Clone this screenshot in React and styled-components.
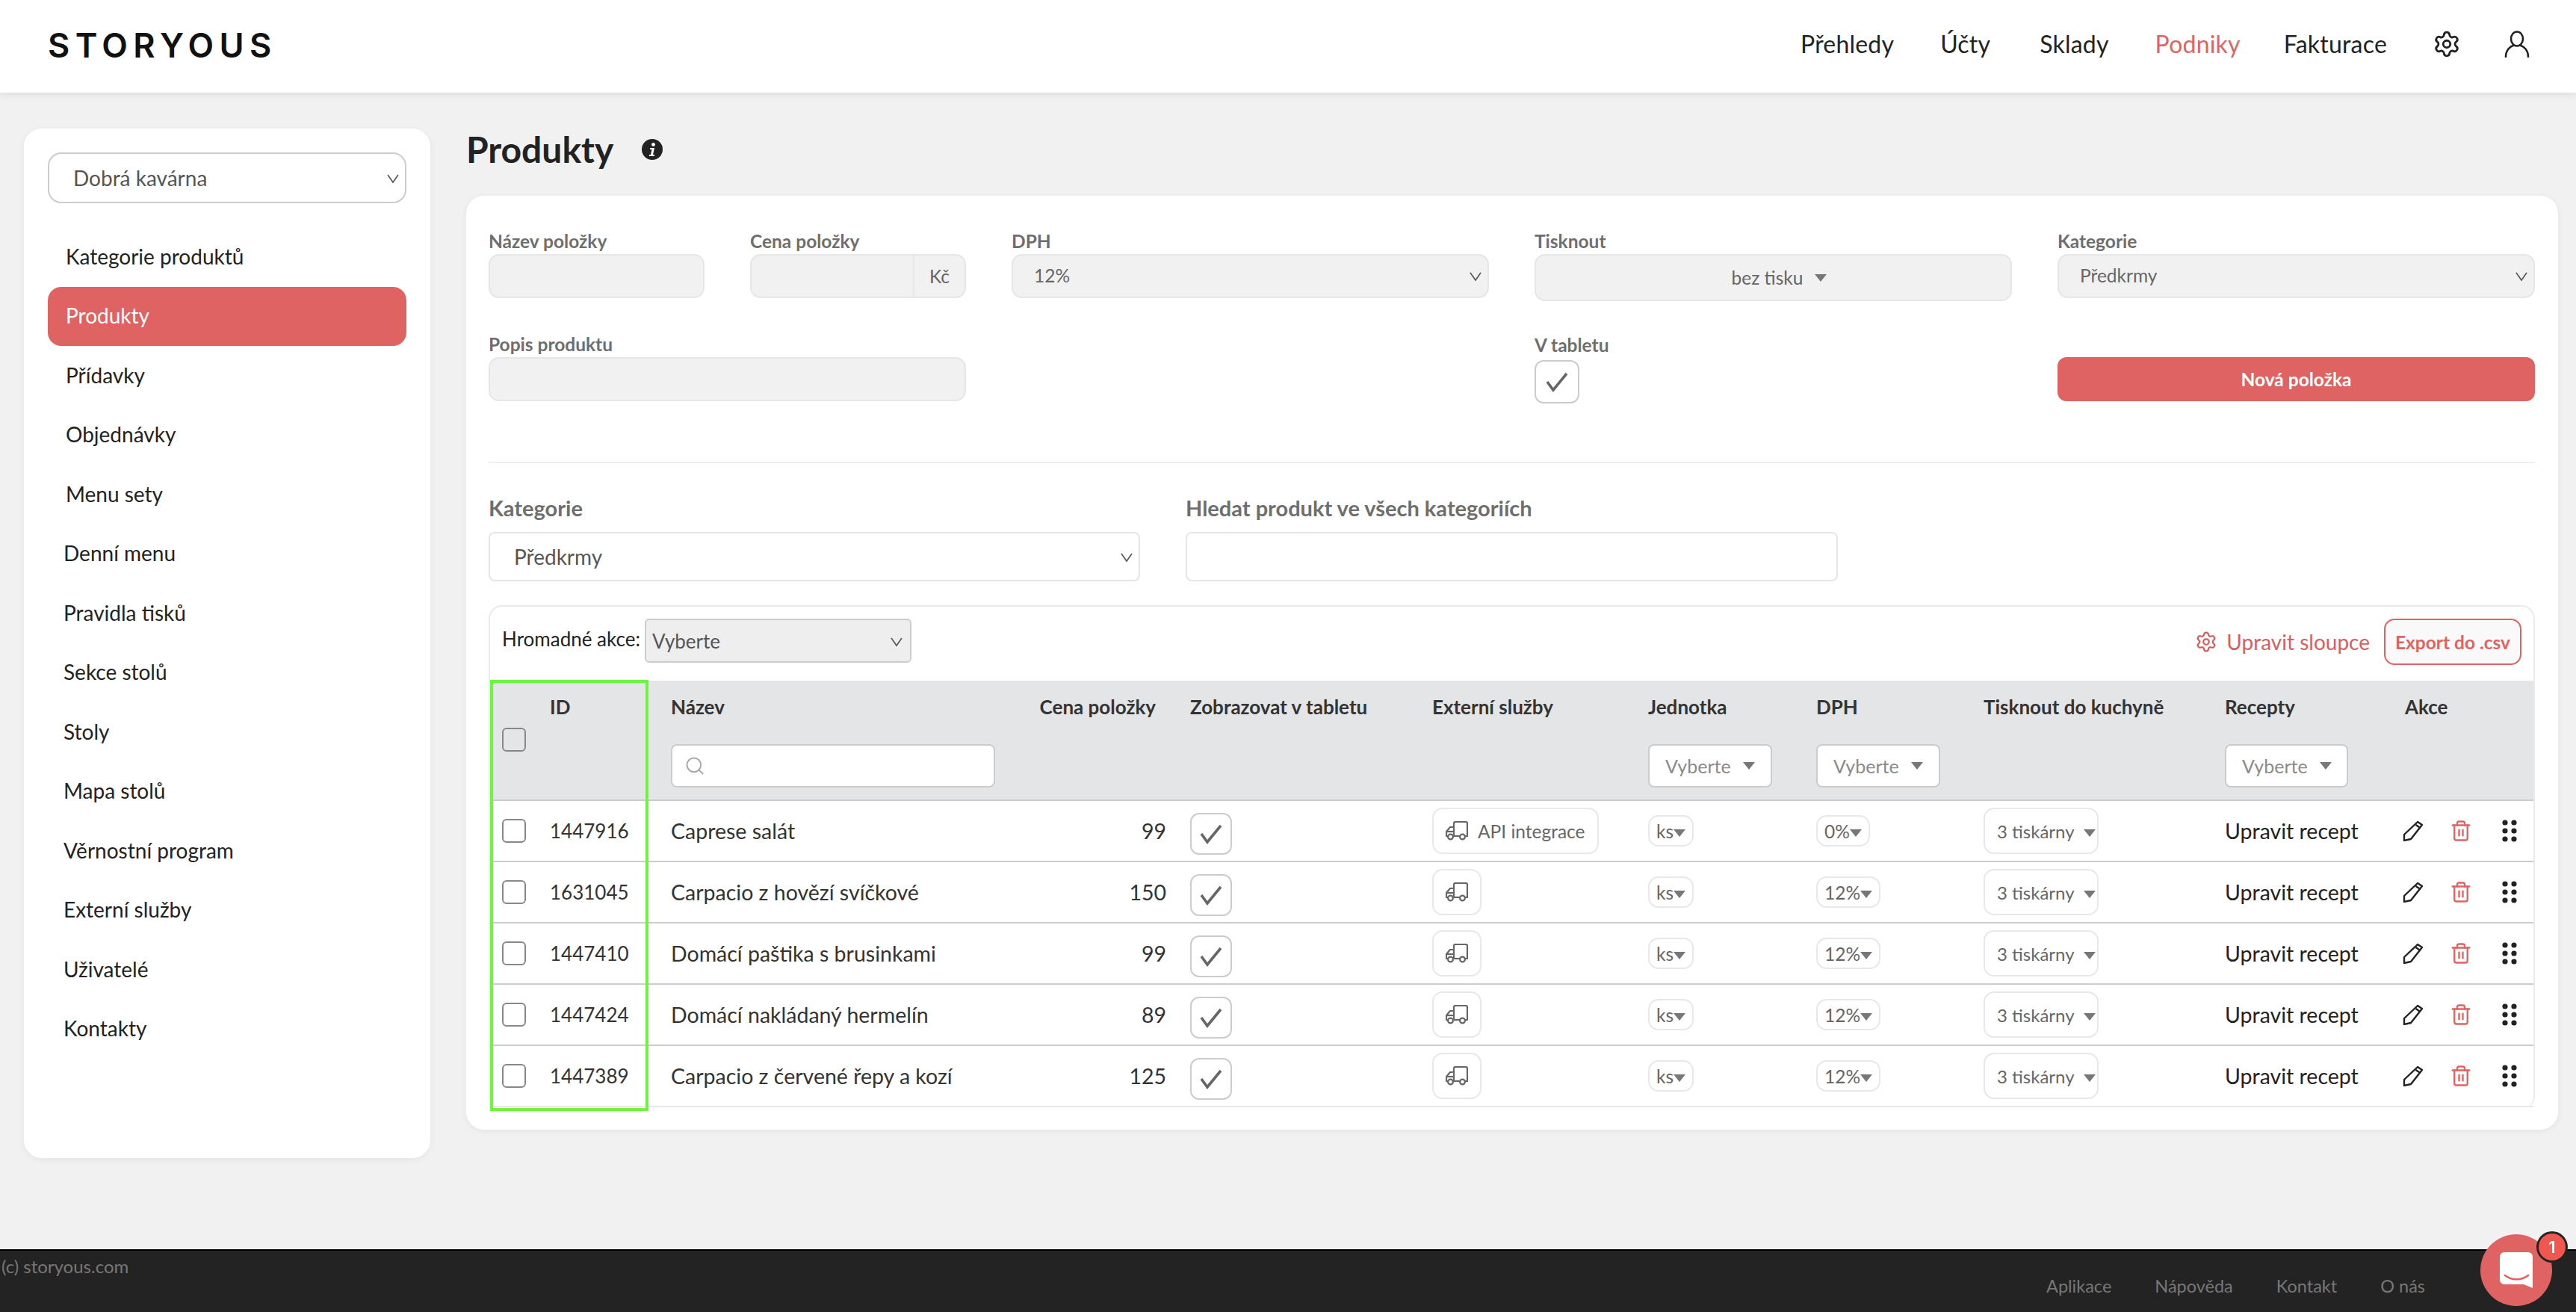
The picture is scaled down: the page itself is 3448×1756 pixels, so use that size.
import React from "react";
import styled, { createGlobalStyle } from "styled-components";
import { Settings, Search, Trash2 } from "lucide-react";

const coral = "#e06363";

const GlobalStyle = createGlobalStyle`
  * { box-sizing: border-box; }
  html, body { margin: 0; padding: 0; }
  body {
    background: #f1f1f1;
    color: #222;
    font-family: Lato, "Noto Sans", sans-serif;
    font-size: 28px;
  }
`;

const Page = styled.div`
  min-height: 100vh;
  display: flex;
  flex-direction: column;
`;

/* Top bar */
const Header = styled.header`
  height: 124px;
  flex: none;
  background: #fff;
  box-shadow: 0 2px 10px rgba(0, 0, 0, 0.1);
  display: flex;
  align-items: center;
  justify-content: space-between;
  padding: 0 62px 0 64px;
`;

const Logo = styled.div`
  font-family: Inter, sans-serif;
  font-size: 45px;
  font-weight: 600;
  letter-spacing: 7.4px;
  color: #111;
  margin-bottom: 3px;
`;

const TopNav = styled.nav`
  display: flex;
  align-items: center;
  gap: 62px;
  margin-bottom: 7px;
`;

const TopLink = styled.a`
  font-size: 32px;
  line-height: 40px;
  letter-spacing: 0.2px;
  margin-left: ${(p) => p.$shift || 0}px;
  color: ${(p) => (p.$active ? coral : "#222")};
`;

const NavIcons = styled.div`
  display: flex;
  align-items: center;
  gap: 58px;
  margin-left: -1px;
`;

/* Body */
const Content = styled.div`
  flex: 1;
  display: flex;
  align-items: flex-start;
  gap: 48px;
  padding: 48px 24px 0 32px;
`;

const Sidebar = styled.aside`
  width: 544px;
  height: 1378px;
  flex: none;
  background: #fff;
  border-radius: 24px;
  box-shadow: 0 2px 10px rgba(0, 0, 0, 0.06);
  padding: 32px;
`;

const VenueSelect = styled.div`
  height: 68px;
  border: 2px solid #ccc;
  border-radius: 18px;
  background: #fff;
  display: flex;
  align-items: center;
  justify-content: space-between;
  padding: 0 6px 0 32px;
  font-size: 28px;
  color: #555;
  margin-bottom: 32px;
`;

const SideMenu = styled.ul`
  list-style: none;
  margin: 0;
  padding: 0;
  display: flex;
  flex-direction: column;
`;

const SideItem = styled.li`
  height: 79.5px;
  display: flex;
  align-items: center;
  padding: 0 0 2px ${(p) => (p.$outdent ? "21px" : "24px")};
  border-radius: 18px;
  font-size: 28px;
  background: ${(p) => (p.$active ? coral : "transparent")};
  color: ${(p) => (p.$active ? "#fff" : "#222")};
`;

const Main = styled.main`
  flex: 1;
  min-width: 0;
`;

const TitleRow = styled.div`
  height: 90px;
  display: flex;
  align-items: flex-start;
  gap: 38px;
`;

const Title = styled.h1`
  margin: 0;
  font-size: 48px;
  line-height: 56px;
  font-weight: 700;
  color: #222;
`;

const InfoWrap = styled.span`
  display: flex;
  margin-top: 14px;
`;

const Card = styled.section`
  background: #fff;
  border-radius: 24px;
  box-shadow: 0 2px 10px rgba(0, 0, 0, 0.06);
  padding: 49px 31px 30px 30px;
`;

/* Item form */
const FormGrid = styled.div`
  display: grid;
  grid-template-columns: 289px 289px 639px 639px 639px;
  column-gap: 61px;
  row-gap: 46px;
`;

const Field = styled.div`
  grid-column: ${(p) => p.$span || "auto"};
`;

const FieldLabel = styled.label`
  display: block;
  height: 26px;
  line-height: 24px;
  margin-bottom: ${(p) => (p.$low ? "6px" : "3px")};
  margin-top: ${(p) => (p.$low ? "1px" : "0")};
  font-size: 24.5px;
  font-weight: 700;
  color: #6e6e6e;
`;

const InputBox = styled.div`
  height: ${(p) => p.$h || 59}px;
  background: #f1f1f1;
  border: 2px solid #e6e6e6;
  border-radius: 14px;
  display: flex;
  align-items: center;
  justify-content: ${(p) => (p.$center ? "center" : "space-between")};
  padding: ${(p) => (p.$center ? "0 0 0 16px" : "0 6px 2px 28px")};
  font-size: 24.5px;
  color: #666;
`;

const PriceBox = styled(InputBox)`
  padding: 0;
  justify-content: flex-end;
`;

const Suffix = styled.span`
  width: 69px;
  height: 100%;
  border-left: 2px solid #e6e6e6;
  display: flex;
  align-items: center;
  justify-content: center;
`;

const Caret = styled.i`
  display: inline-block;
  width: 0;
  height: 0;
  flex: none;
  margin-left: ${(p) => p.$gap ?? 16}px;
  border-left: 8px solid transparent;
  border-right: 8px solid transparent;
  border-top: 10px solid ${(p) => p.$color || "#777"};
  vertical-align: middle;
`;

const CheckBox = styled.span`
  display: inline-flex;
  align-items: center;
  justify-content: center;
  width: ${(p) => p.$w}px;
  height: ${(p) => p.$h}px;
  border: 2px solid #ccc;
  border-radius: 12px;
  background: #fff;
  color: #666;
`;

const SaveButton = styled.button`
  display: block;
  width: 100%;
  height: 59px;
  margin-top: 29px;
  border: 0;
  border-radius: 12px;
  background: ${coral};
  color: #fff;
  font-family: inherit;
  font-size: 24.5px;
  font-weight: 700;
`;

const Divider = styled.hr`
  height: 2px;
  margin: 78px 0 45px;
  border: 0;
  background: #eee;
`;

/* Filters above the table */
const FilterRow = styled.div`
  display: flex;
  gap: 61px;
  margin-bottom: 32px;
`;

const FilterField = styled.div`
  width: ${(p) => p.$w}px;
`;

const FilterLabel = styled.label`
  display: block;
  height: 32px;
  line-height: 30px;
  margin-bottom: 15px;
  font-size: 29px;
  font-weight: 700;
  color: #6e6e6e;
`;

const FilterBox = styled.div`
  height: 66px;
  border: 2px solid #e6e6e6;
  border-radius: 8px;
  background: #fff;
  display: flex;
  align-items: center;
  justify-content: space-between;
  padding: 0 6px 0 32px;
  font-size: 28px;
  color: #555;
`;

/* Table */
const TablePanel = styled.div`
  position: relative;
  border: 2px solid #ebebeb;
  border-bottom: 0;
  border-radius: 18px 18px 14px 14px;
`;

const Toolbar = styled.div`
  height: 99px;
  display: flex;
  justify-content: space-between;
  padding: 16px 16px 0 16px;
`;

const BulkGroup = styled.div`
  display: flex;
  align-items: flex-start;
  gap: 6px;
  font-size: 26px;
  line-height: 54px;
`;

const BulkSelect = styled.div`
  width: 357px;
  height: 59px;
  border: 2px solid #ccc;
  border-radius: 6px;
  background: #eee;
  display: flex;
  align-items: center;
  justify-content: space-between;
  padding: 0 8px 0 8px;
  font-size: 26px;
  color: #555;
`;

const ToolActions = styled.div`
  display: flex;
  align-items: flex-start;
  gap: 19px;
`;

const EditColumns = styled.a`
  display: flex;
  align-items: center;
  gap: 12px;
  height: 62px;
  color: #d65f5f;
  font-size: 28px;
`;

const ExportButton = styled.button`
  width: 184px;
  height: 62px;
  padding: 0;
  border: 2px solid ${coral};
  border-radius: 14px;
  background: #f9f9f9;
  color: ${coral};
  font-family: inherit;
  font-size: 24.5px;
  font-weight: 700;
`;

const Table = styled.table`
  width: 100%;
  table-layout: fixed;
  border-collapse: separate;
  border-spacing: 0;
`;

const Th = styled.th`
  height: 161px;
  padding: ${(p) => (p.$checkCell ? "63px 0 0 16px" : "22px 0 0 16px")};
  vertical-align: top;
  text-align: left;
  background: #e4e5e7;
  border-bottom: 2px solid #ccc;
  font-size: 26px;
  line-height: 26px;
  font-weight: 700;
  color: #333;
  white-space: nowrap;
`;

const HeadTitle = styled.div`
  text-align: ${(p) => p.$align || "left"};
  padding-right: ${(p) => p.$pr || 0}px;
`;

const HeadFilter = styled.div`
  width: ${(p) => p.$w}px;
  height: 58px;
  margin-top: 37px;
  border: 2px solid #ccc;
  border-radius: 8px;
  background: #fff;
  display: flex;
  align-items: center;
  padding: 0 21px;
  font-size: 25px;
  font-weight: 400;
  color: #8a8a8a;
`;

const HeadSearch = styled(HeadFilter)`
  padding: 0 16px;
  color: #aaa;
`;

const Td = styled.td`
  height: 82px;
  padding: 0 ${(p) => (p.$right ? "16px" : "0")} 0 ${(p) => (p.$right ? "0" : "16px")};
  vertical-align: middle;
  text-align: ${(p) => (p.$right ? "right" : "left")};
  border-bottom: 2px solid ${(p) => (p.$last ? "#e8e8e8" : "#ccc")};
  font-size: ${(p) => p.$fs || 28.5}px;
  color: #333;
  white-space: nowrap;
`;

const RowCheck = styled.span`
  display: block;
  width: 32px;
  height: 32px;
  border: 2px solid #888;
  border-radius: 6px;
  background: ${(p) => (p.$head ? "#e4e5e7" : "#fff")};
`;

const TabletCheck = styled(CheckBox)`
  margin-top: 8px;
  vertical-align: middle;
`;

const PillButton = styled.span`
  display: inline-flex;
  align-items: center;
  gap: 13px;
  height: ${(p) => p.$h}px;
  padding: 0 ${(p) => p.$pr ?? p.$px}px 0 ${(p) => p.$px}px;
  border: 2px solid #e8e8e8;
  border-radius: 14px;
  background: #fff;
  font-size: ${(p) => p.$fs || 24.5}px;
  color: #666;
  vertical-align: middle;
`;

const Actions = styled.div`
  display: flex;
  align-items: center;
  gap: 35px;
  margin-left: -3px;
  color: #222;
`;

const GripWrap = styled.span`
  display: flex;
  margin-left: 5px;
`;

const RecipeLink = styled.a`
  color: #222;
`;

/* Marker drawn over the ID column */
const Highlight = styled.div`
  position: absolute;
  left: 0;
  top: 98px;
  width: 212px;
  height: 577px;
  border: 4px solid #6ef542;
  pointer-events: none;
`;

/* Footer */
const Footer = styled.footer`
  height: 84px;
  flex: none;
  margin-top: auto;
  background: #232323;
  border-top: 2px solid #000;
  display: flex;
  justify-content: space-between;
  padding: 6px 202px 0 2px;
  font-size: 24px;
  color: #777;
`;

const FooterLinks = styled.div`
  display: flex;
  gap: 58px;
  padding-top: 27px;
  font-size: 23.5px;
`;

const Messenger = styled.div`
  position: fixed;
  left: 3320px;
  top: 1652px;
  width: 96px;
  height: 96px;
  border-radius: 50%;
  background: ${coral};
  display: flex;
  align-items: center;
  justify-content: center;
`;

const Badge = styled.span`
  position: absolute;
  right: -18px;
  top: -1px;
  width: 36px;
  height: 36px;
  border-radius: 50%;
  background: #f0584f;
  box-shadow: 0 0 0 3px #232323;
  color: #fff;
  font-family: Inter, sans-serif;
  font-size: 22px;
  font-weight: 600;
  display: flex;
  align-items: center;
  justify-content: center;
`;

const Chevron = () => (
  <svg width="20" height="20" viewBox="0 0 20 20" fill="none" stroke="#555" strokeWidth="1.6">
    <path d="M3 6l7 10 7-10" />
  </svg>
);

const Check = ({ size = 30 }) => (
  <svg width={size} height={size} viewBox="0 0 30 30" fill="none" stroke="currentColor" strokeWidth="3.6">
    <path d="M2 15l8 11L28 4" />
  </svg>
);

const Info = () => (
  <svg width="28" height="28" viewBox="0 0 28 28">
    <circle cx="14" cy="14" r="14" fill="#222" />
    <circle cx="15.5" cy="7.5" r="2.4" fill="#fff" />
    <path d="M11 12h6l-2 9h2v2h-7v-2h2l1.5-7H11z" fill="#fff" />
  </svg>
);

const UserIcon = () => (
  <svg width="34" height="36" viewBox="0 0 34 36" fill="none" stroke="#222" strokeWidth="2.6" strokeLinecap="round">
    <ellipse cx="17" cy="11" rx="8" ry="9.5" />
    <path d="M2 35c0-9 6-14 10-15M32 35c0-9-6-14-10-15" />
  </svg>
);

const TruckIcon = () => (
  <svg width="30" height="26" viewBox="0 0 30 26" fill="none" stroke="#666" strokeWidth="2.2" strokeLinejoin="round">
    <path d="M11 20V3a2 2 0 0 1 2-2h14a2 2 0 0 1 2 2v17h-4" />
    <path d="M11 8H6l-5 6v6h2" />
    <path d="M1 14h10" />
    <path d="M11 20h9" />
    <circle cx="6.5" cy="21" r="3.4" />
    <circle cx="22.5" cy="21" r="3.4" />
  </svg>
);

const PencilIcon = () => (
  <svg width="28" height="28" viewBox="0 0 28 28" fill="none" stroke="#222" strokeWidth="2.4" strokeLinejoin="round">
    <path d="M20 2l6 4L11 25l-9 2 0-8z" />
    <path d="M17.5 6l6 4" />
  </svg>
);

const GripIcon = () => (
  <svg width="20" height="30" viewBox="0 0 20 30" fill="#222">
    <circle cx="4" cy="4" r="3.6" />
    <circle cx="16" cy="4" r="3.6" />
    <circle cx="4" cy="15" r="3.6" />
    <circle cx="16" cy="15" r="3.6" />
    <circle cx="4" cy="26" r="3.6" />
    <circle cx="16" cy="26" r="3.6" />
  </svg>
);

const ChatIcon = () => (
  <svg width="44" height="48" viewBox="0 0 44 48">
    <path d="M6 0h32a6 6 0 0 1 6 6v42l-12-5H6a6 6 0 0 1-6-6V6a6 6 0 0 1 6-6z" fill="#fff" />
    <path d="M7 31c9 7 22 7 31 0" fill="none" stroke={coral} strokeWidth="2.6" strokeLinecap="round" />
  </svg>
);

const sideItems = [
  ["Kategorie produktů"],
  ["Produkty", "active"],
  ["Přídavky"],
  ["Objednávky"],
  ["Menu sety"],
  ["Denní menu", "outdent"],
  ["Pravidla tisků", "outdent"],
  ["Sekce stolů", "outdent"],
  ["Stoly", "outdent"],
  ["Mapa stolů", "outdent"],
  ["Věrnostní program", "outdent"],
  ["Externí služby", "outdent"],
  ["Uživatelé", "outdent"],
  ["Kontakty", "outdent"],
];

const products = [
  { id: "1447916", name: "Caprese salát", price: 99, vat: "0%", api: true },
  { id: "1631045", name: "Carpacio z hovězí svíčkové", price: 150, vat: "12%" },
  { id: "1447410", name: "Domácí paštika s brusinkami", price: 99, vat: "12%" },
  { id: "1447424", name: "Domácí nakládaný hermelín", price: 89, vat: "12%" },
  { id: "1447389", name: "Carpacio z červené řepy a kozí", price: 125, vat: "12%" },
];

// column starts follow the reference: 656, 720, 882, 1350, 1577, 1901, 2190, 2415, 2639, 2962, 3203
const colWidths = [64, 162, 468, 227, 324, 289, 225, 224, 323, 241, 188];

function App() {
  return (
    <Page>
      <GlobalStyle />
      <Header>
        <Logo>STORYOUS</Logo>
        <TopNav>
          <TopLink>Přehledy</TopLink>
          <TopLink>Účty</TopLink>
          <TopLink $shift={4}>Sklady</TopLink>
          <TopLink $active>Podniky</TopLink>
          <TopLink $shift={-4}>Fakturace</TopLink>
          <NavIcons>
            <Settings size={38} strokeWidth={1.8} color="#222" />
            <UserIcon />
          </NavIcons>
        </TopNav>
      </Header>

      <Content>
        <Sidebar>
          <VenueSelect>
            Dobrá kavárna
            <Chevron />
          </VenueSelect>
          <SideMenu>
            {sideItems.map(([label, kind]) => (
              <SideItem key={label} $active={kind === "active"} $outdent={kind === "outdent"}>
                {label}
              </SideItem>
            ))}
          </SideMenu>
        </Sidebar>

        <Main>
          <TitleRow>
            <Title>Produkty</Title>
            <InfoWrap>
              <Info />
            </InfoWrap>
          </TitleRow>

          <Card>
            <FormGrid>
              <Field>
                <FieldLabel>Název položky</FieldLabel>
                <InputBox />
              </Field>
              <Field>
                <FieldLabel>Cena položky</FieldLabel>
                <PriceBox>
                  <Suffix>Kč</Suffix>
                </PriceBox>
              </Field>
              <Field>
                <FieldLabel>DPH</FieldLabel>
                <InputBox>
                  12%
                  <Chevron />
                </InputBox>
              </Field>
              <Field>
                <FieldLabel>Tisknout</FieldLabel>
                <InputBox $h={63} $center>
                  bez tisku
                  <Caret />
                </InputBox>
              </Field>
              <Field>
                <FieldLabel>Kategorie</FieldLabel>
                <InputBox>
                  Předkrmy
                  <Chevron />
                </InputBox>
              </Field>
              <Field $span="1 / span 2">
                <FieldLabel>Popis produktu</FieldLabel>
                <InputBox />
              </Field>
              <Field $span="4">
                <FieldLabel $low>V tabletu</FieldLabel>
                <CheckBox $w={60} $h={58}>
                  <Check />
                </CheckBox>
              </Field>
              <Field $span="5">
                <SaveButton>Nová položka</SaveButton>
              </Field>
            </FormGrid>

            <Divider />

            <FilterRow>
              <FilterField $w={872}>
                <FilterLabel>Kategorie</FilterLabel>
                <FilterBox>
                  Předkrmy
                  <Chevron />
                </FilterBox>
              </FilterField>
              <FilterField $w={873}>
                <FilterLabel>Hledat produkt ve všech kategoriích</FilterLabel>
                <FilterBox />
              </FilterField>
            </FilterRow>

            <TablePanel>
              <Toolbar>
                <BulkGroup>
                  Hromadné akce:
                  <BulkSelect>
                    Vyberte
                    <Chevron />
                  </BulkSelect>
                </BulkGroup>
                <ToolActions>
                  <EditColumns>
                    <Settings size={30} strokeWidth={1.8} />
                    Upravit sloupce
                  </EditColumns>
                  <ExportButton>Export do .csv</ExportButton>
                </ToolActions>
              </Toolbar>

              <Table>
                <colgroup>
                  {colWidths.map((w, i) => (
                    <col key={i} style={{ width: w }} />
                  ))}
                </colgroup>
                <thead>
                  <tr>
                    <Th $checkCell>
                      <RowCheck $head />
                    </Th>
                    <Th>ID</Th>
                    <Th>
                      <HeadTitle>Název</HeadTitle>
                      <HeadSearch $w={434}>
                        <Search size={28} strokeWidth={1.8} />
                      </HeadSearch>
                    </Th>
                    <Th>
                      <HeadTitle $align="right" $pr={30}>
                        Cena položky
                      </HeadTitle>
                    </Th>
                    <Th>Zobrazovat v tabletu</Th>
                    <Th>Externí služby</Th>
                    <Th>
                      <HeadTitle>Jednotka</HeadTitle>
                      <HeadFilter $w={166}>
                        Vyberte
                        <Caret />
                      </HeadFilter>
                    </Th>
                    <Th>
                      <HeadTitle>DPH</HeadTitle>
                      <HeadFilter $w={166}>
                        Vyberte
                        <Caret />
                      </HeadFilter>
                    </Th>
                    <Th>Tisknout do kuchyně</Th>
                    <Th>
                      <HeadTitle>Recepty</HeadTitle>
                      <HeadFilter $w={165}>
                        Vyberte
                        <Caret />
                      </HeadFilter>
                    </Th>
                    <Th>Akce</Th>
                  </tr>
                </thead>
                <tbody>
                  {products.map((p, i) => {
                    const last = i === products.length - 1;
                    return (
                      <tr key={p.id}>
                        <Td $last={last}>
                          <RowCheck />
                        </Td>
                        <Td $last={last} $fs={26}>
                          {p.id}
                        </Td>
                        <Td $last={last}>{p.name}</Td>
                        <Td $last={last} $right>
                          {p.price}
                        </Td>
                        <Td $last={last}>
                          <TabletCheck $w={56} $h={56}>
                            <Check />
                          </TabletCheck>
                        </Td>
                        <Td $last={last}>
                          <PillButton $h={62} $px={16}>
                            <TruckIcon />
                            {p.api && "API integrace"}
                          </PillButton>
                        </Td>
                        <Td $last={last}>
                          <PillButton $h={42} $px={9}>
                            <span>
                              ks
                              <Caret $gap={0} />
                            </span>
                          </PillButton>
                        </Td>
                        <Td $last={last}>
                          <PillButton $h={42} $px={9}>
                            <span>
                              {p.vat}
                              <Caret $gap={0} />
                            </span>
                          </PillButton>
                        </Td>
                        <Td $last={last}>
                          <PillButton $h={62} $px={16} $pr={2} $fs={24}>
                            <span>
                              3 tiskárny
                              <Caret $gap={12} />
                            </span>
                          </PillButton>
                        </Td>
                        <Td $last={last}>
                          <RecipeLink>Upravit recept</RecipeLink>
                        </Td>
                        <Td $last={last}>
                          <Actions>
                            <PencilIcon />
                            <Trash2 size={30} strokeWidth={1.9} color={coral} />
                            <GripWrap>
                              <GripIcon />
                            </GripWrap>
                          </Actions>
                        </Td>
                      </tr>
                    );
                  })}
                </tbody>
              </Table>
              <Highlight />
            </TablePanel>
          </Card>
        </Main>
      </Content>

      <Footer>
        <span>(c) storyous.com</span>
        <FooterLinks>
          <span>Aplikace</span>
          <span>Nápověda</span>
          <span>Kontakt</span>
          <span>O nás</span>
        </FooterLinks>
      </Footer>

      <Messenger>
        <ChatIcon />
        <Badge>1</Badge>
      </Messenger>
    </Page>
  );
}

export default App;
